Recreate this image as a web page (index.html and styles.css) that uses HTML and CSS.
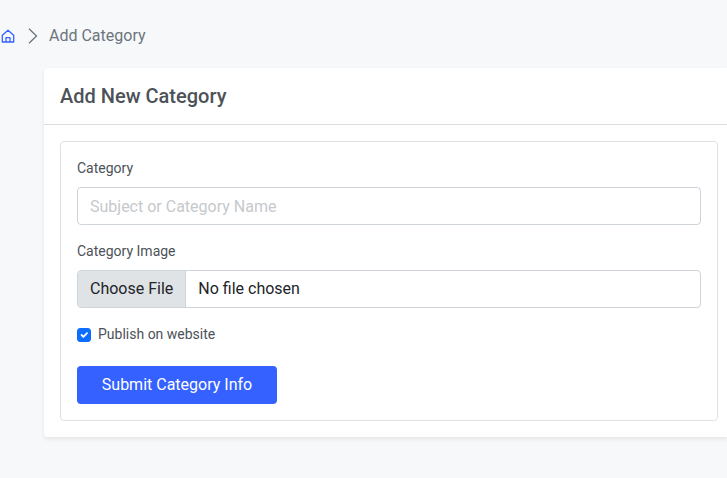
FILE: index.html
```html
<!DOCTYPE html>
<html lang="en">
<head>
<meta charset="utf-8">
<meta name="viewport" content="width=device-width, initial-scale=1">
<title>Add Category</title>
<link rel="stylesheet" href="styles.css">
</head>
<body>
<nav class="breadcrumb" aria-label="Breadcrumb">
  <a class="home" href="#" aria-label="Home">
    <svg viewBox="0 0 14 14" width="14" height="14" fill="none" stroke="currentColor" stroke-width="1.3" stroke-linejoin="round" stroke-linecap="round"><path d="M1.3 6.2 7 1.3 12.7 6.2V13H1.3ZM5 12.8V8.7H9V12.8"/></svg>
  </a>
  <svg class="chevron" viewBox="0 0 10 16" width="10" height="16" fill="none" stroke="currentColor" stroke-width="1.3"><path d="M1 .8 8.5 8 1 15.2"/></svg>
  <span>Add Category</span>
</nav>
<main class="card">
  <header class="card-header"><h1>Add New Category</h1></header>
  <div class="card-body">
    <form class="panel">
      <label class="label" for="category">Category</label>
      <input class="control" id="category" type="text" placeholder="Subject or Category Name">
      <label class="label" for="image">Category Image</label>
      <input class="control file" id="image" type="file">
      <div class="check">
        <input id="publish" type="checkbox" checked>
        <label for="publish">Publish on website</label>
      </div>
      <button class="submit" type="button">Submit Category Info</button>
    </form>
  </div>
</main>
</body>
</html>
```
FILE: styles.css
```css
* { box-sizing: border-box; }

body {
  margin: 0;
  background: #f7f8fa;
  color: #4c5258;
  font: 14px/21px Roboto, sans-serif;
}

.breadcrumb {
  display: flex;
  align-items: center;
  padding: 24px 0 0 1px;
  color: #6c757d;
  font-size: 16px;
  line-height: 24px;
}

.home {
  display: flex;
  color: #3461ff;
}

.chevron { margin: 0 11px 0 13px; }

.card {
  margin: 20px 0 40px 44px;
  background: #fff;
  border-radius: 4px 0 0 4px;
  box-shadow: 0 2px 4px rgba(0, 0, 0, .08);
}

.card-header {
  padding: 16px;
  border-bottom: 1px solid #dcdee0;
}

h1 {
  margin: 0;
  font-size: 20px;
  font-weight: 500;
  line-height: 24px;
}

.card-body { padding: 16px 9px 16px 16px; }

.panel {
  padding: 16px;
  border: 1px solid #dee2e6;
  border-radius: 4px;
}

.label {
  display: block;
  margin-bottom: 8px;
}

.control {
  display: block;
  width: 100%;
  height: 38px;
  margin: 0 0 16px;
  padding: 6px 12px;
  border: 1px solid #ced4da;
  border-radius: 4px;
  background: #fff;
  color: #212529;
  font: 16px/24px Roboto, sans-serif;
}

.control::placeholder {
  color: #c6c9cc;
  opacity: 1;
}

.file { overflow: hidden; }

.file::file-selector-button {
  margin: -6px 12px -6px -12px;
  padding: 6px 12px;
  border: 0 solid #ced4da;
  border-right-width: 1px;
  border-radius: 0;
  background: #dfe3e6;
  color: #212529;
  font: inherit;
}

.check {
  display: flex;
  align-items: center;
  gap: 7px;
  margin-bottom: 21px;
}

.check input {
  appearance: none;
  width: 14px;
  height: 14px;
  margin: 0;
  border: 1px solid #ced4da;
  border-radius: 3px;
}

.check input:checked {
  border-color: #0d6efd;
  background: #0d6efd url("data:image/svg+xml,%3Csvg xmlns='http://www.w3.org/2000/svg' viewBox='0 0 20 20'%3E%3Cpath fill='none' stroke='%23fff' stroke-linecap='round' stroke-linejoin='round' stroke-width='3' d='m6 10 3 3 6-6'/%3E%3C/svg%3E") center / contain no-repeat;
}

.submit {
  display: block;
  padding: 7px 24px;
  min-width: 200px;
  border: 0;
  border-radius: 4px;
  background: #3461ff;
  color: #fff;
  font: 16px/24px Roboto, sans-serif;
}
```
